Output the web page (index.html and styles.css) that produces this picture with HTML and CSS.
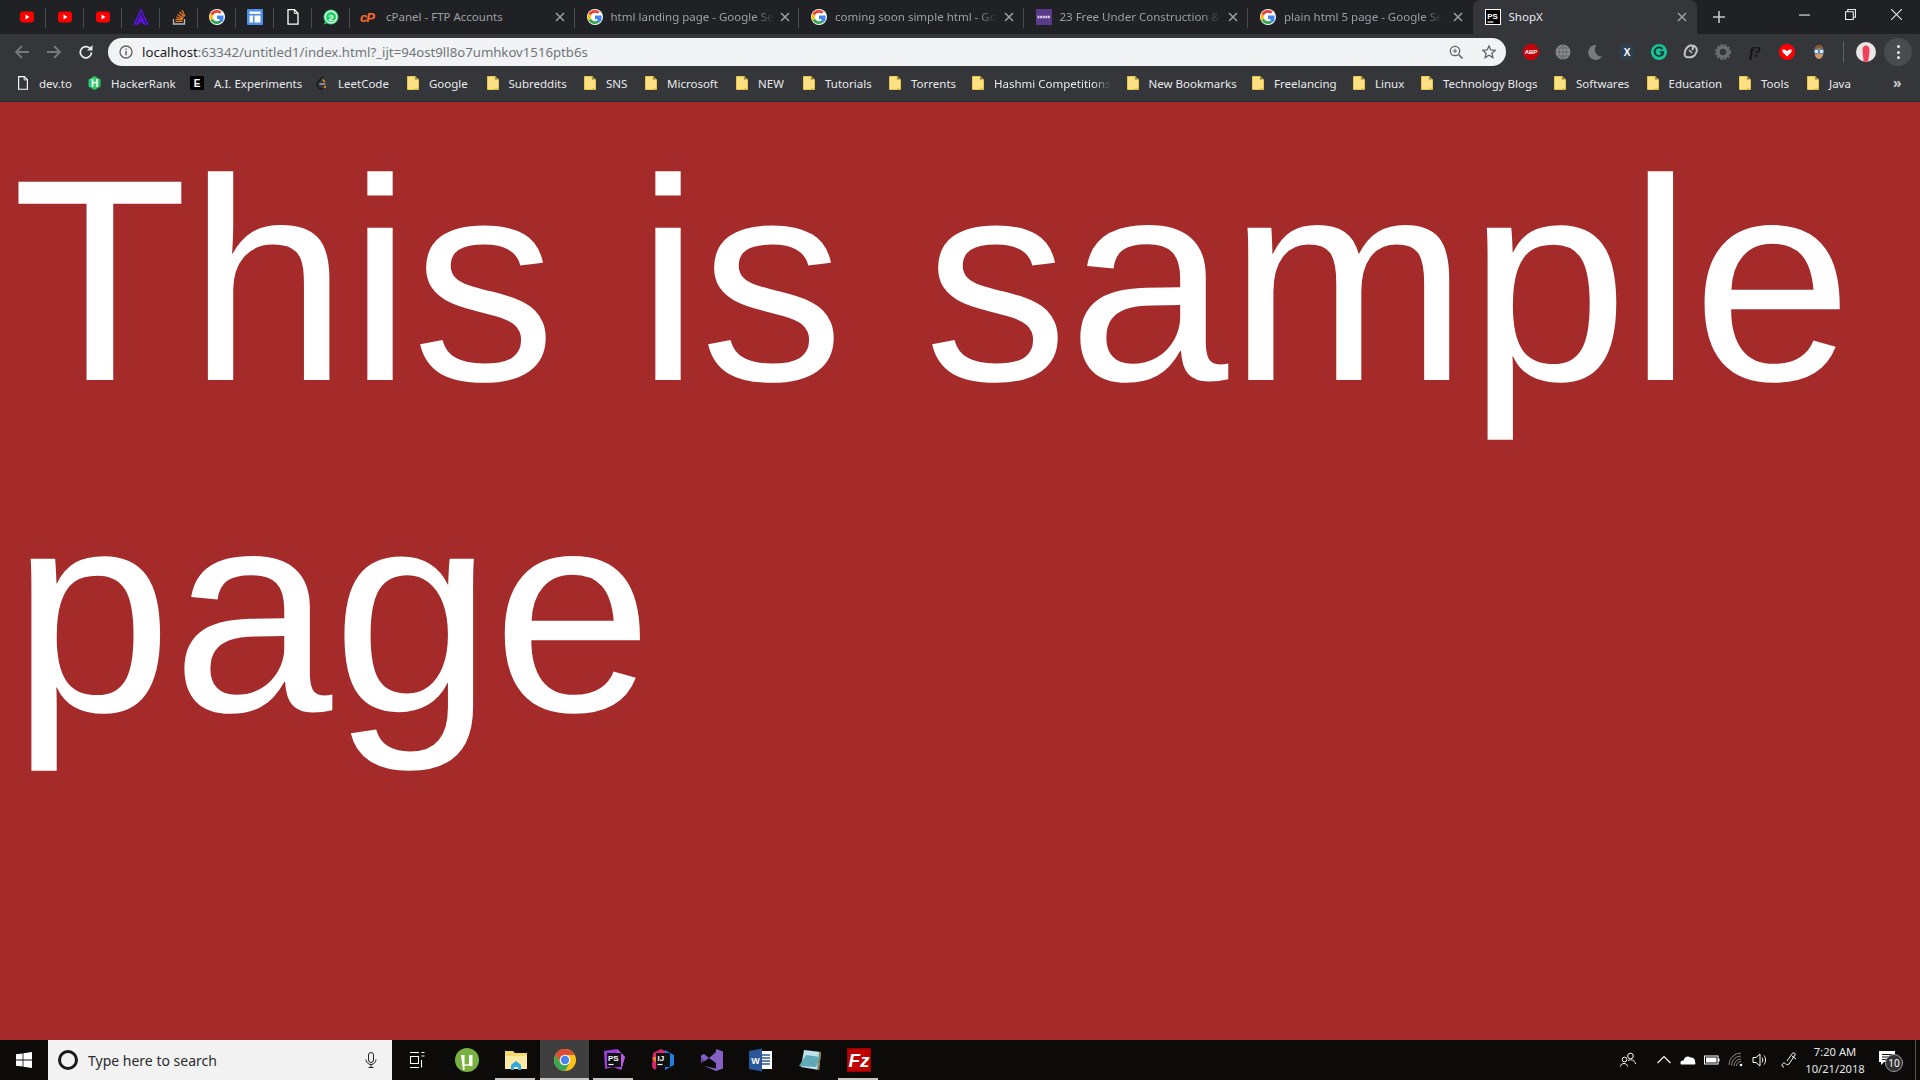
FILE: index.html
```html
<!DOCTYPE html>
<html lang="en">
<head>
    <meta charset="UTF-8">
    <title>ShopX</title>
    <link rel="stylesheet" href="styles.css">
</head>
<body>
    <svg class="sprites" width="0" height="0">
        <symbol id="yt" viewBox="0 0 16 16"><rect x="1" y="2.500" width="14" height="11" rx="3" fill="#f00"/><path d="M6.500 5.500v5l4-2.500z" fill="#fff"/></symbol>
        <symbol id="goog" viewBox="0 0 16 16">
            <circle cx="8" cy="8" r="8" fill="#fff"/>
            <path d="M8 6.600h6.500c.1.500.1 1 .1 1.400 0 .7-.1 1.300-.3 1.900H8z" fill="#4285f4"/>
            <path d="M3.900 9.400l-2.400 1.900A7 7 0 0 0 8 15c1.800 0 3.400-.6 4.600-1.700l-2.300-1.800c-.6.400-1.400.7-2.300.7-1.900 0-3.500-1.200-4.100-2.800z" fill="#34a853"/>
            <path d="M1.500 4.700a7 7 0 0 0 0 6.600l2.400-1.900a4.200 4.200 0 0 1 0-2.800z" fill="#fbbc05"/>
            <path d="M8 1A7 7 0 0 0 1.500 4.700l2.400 1.900C4.500 5 6.100 3.800 8 3.800c1 0 1.900.4 2.600 1l2.100-2.100A7 7 0 0 0 8 1z" fill="#ea4335"/>
            <path d="M12.600 13.300c1.200-1 1.900-2.100 2-3.400H10.500c.1.600-.1 1.100-.2 1.600z" fill="#4285f4"/>
        </symbol>
        <symbol id="folder" viewBox="0 0 12 14"><path d="M.5.500h7.500v2.500c0 .5.200.7.700.7h2.800v9.800H.5z" fill="#ffe082" stroke="#e6c64d"/><path d="M8 .5l3.500 3.200" stroke="#e6c64d" fill="none"/><path d="M8 13h3.500" stroke="#d4b23c"/></symbol>
        <symbol id="page" viewBox="0 0 12 16"><path d="M1 .7h6.500L11 4.200v11H1z" fill="none" stroke="#fff" stroke-width="1.300"/><path d="M7.300.7v3.700H11" fill="none" stroke="#fff"/></symbol>
        <symbol id="close" viewBox="0 0 10 10"><path d="M1 1l8 8M9 1l-8 8" stroke="#9aa0a6" stroke-width="1.500"/></symbol>
    </svg>

    <div class="tabstrip">
        <div class="pin"><svg class="ico16"><use href="#yt"/></svg></div>
        <div class="pin"><svg class="ico16"><use href="#yt"/></svg></div>
        <div class="pin"><svg class="ico16"><use href="#yt"/></svg></div>
        <div class="pin"><svg class="ico16" viewBox="0 0 16 16"><path d="M8 1L1.500 15h2.800L8 7l3.700 8h2.800zM5.300 15L8 10.500l2.700 4.500" fill="none" stroke="#5b12e0" stroke-width="1.600"/></svg></div>
        <div class="pin"><svg class="ico16" viewBox="0 0 16 16"><path d="M2.500 10v5h11v-5" fill="none" stroke="#bcbbbb" stroke-width="1.300"/><path d="M4.500 12.500h7M4.700 10.300l6.800.6M5.300 8l6.600 1.800M6.500 5.500l5.900 3.400M8.500 3l4.800 4.800M11 1l2.800 5.900" stroke="#f48024" stroke-width="1.200"/></svg></div>
        <div class="pin"><svg class="ico16"><use href="#goog"/></svg></div>
        <div class="pin"><svg class="ico16" viewBox="0 0 16 16"><rect width="16" height="16" rx="1" fill="#4a8fe7"/><path d="M2.500 2.500h11v2.500h-11zM2.500 6.500h3.500v7h-3.500zM7.500 6.500h6v7h-6z" fill="#fff"/></svg></div>
        <div class="pin"><svg class="ico16"><use href="#page"/></svg></div>
        <div class="pin"><svg class="ico16" viewBox="0 0 16 16"><circle cx="8" cy="8" r="7.500" fill="#25d366"/><path d="M1 15.500l1.300-4.300 2.800 2.800z" fill="#25d366"/><circle cx="8" cy="8" r="5.800" fill="none" stroke="#fff" stroke-width="1.200"/><text x="8" y="11.500" class="wa-count">2</text></svg></div>

        <div class="tab">
            <svg class="cp" viewBox="0 0 18 14"><text x="0" y="12" class="cp-mark">cP</text></svg>
            <span class="tab-title">cPanel - FTP Accounts</span>
            <svg class="tab-x"><use href="#close"/></svg>
        </div>
        <div class="tab">
            <svg class="ico16"><use href="#goog"/></svg>
            <span class="tab-title tab-fade">html landing page - Google Se</span>
            <svg class="tab-x"><use href="#close"/></svg>
        </div>
        <div class="tab">
            <svg class="ico16"><use href="#goog"/></svg>
            <span class="tab-title tab-fade">coming soon simple html - Go</span>
            <svg class="tab-x"><use href="#close"/></svg>
        </div>
        <div class="tab">
            <svg class="ico16" viewBox="0 0 16 16"><rect width="16" height="16" fill="#5b3a8c"/><path d="M1.500 8h13" stroke="#d8d0e8" stroke-width="2.500" stroke-dasharray="2 .6"/></svg>
            <span class="tab-title tab-fade">23 Free Under Construction &amp;</span>
            <svg class="tab-x"><use href="#close"/></svg>
        </div>
        <div class="tab tab-nosep">
            <svg class="ico16"><use href="#goog"/></svg>
            <span class="tab-title tab-fade">plain html 5 page - Google Se</span>
            <svg class="tab-x"><use href="#close"/></svg>
        </div>
        <div class="tab tab-active">
            <svg class="ico16" viewBox="0 0 16 16"><rect width="16" height="16" fill="#000"/><rect x=".5" y=".5" width="15" height="15" fill="none" stroke="#fff"/><text x="2.200" y="9.500" class="ps-mark">PS</text><path d="M2.500 13h6" stroke="#fff" stroke-width="1.200"/></svg>
            <span class="tab-title">ShopX</span>
            <svg class="tab-x"><use href="#close"/></svg>
        </div>
        <svg class="newtab" viewBox="0 0 12 12"><path d="M6 0v12M0 6h12" stroke="#c4c7c5" stroke-width="1.600"/></svg>
        <div class="winbtns">
            <svg class="winbtn" viewBox="0 0 10 10"><path d="M0 5.500h10" stroke="#e8eaed"/></svg>
            <svg class="winbtn" viewBox="0 0 10 10"><path d="M.5 2.500h7v7h-7zM2.500 2.500v-2h7v7h-2" fill="none" stroke="#e8eaed"/></svg>
            <svg class="winbtn" viewBox="0 0 10 10"><path d="M0 0l10 10M10 0L0 10" stroke="#e8eaed"/></svg>
        </div>
    </div>

    <div class="toolbar">
        <svg class="nav" viewBox="0 0 16 16"><path d="M15 8H2M8 2L2 8l6 6" fill="none" stroke="#75787c" stroke-width="1.800"/></svg>
        <svg class="nav" viewBox="0 0 16 16"><path d="M1 8h13M8 2l6 6-6 6" fill="none" stroke="#75787c" stroke-width="1.800"/></svg>
        <svg class="nav" viewBox="0 0 16 16"><path d="M13.500 8.500a5.600 5.600 0 1 1-1.700-4.300" fill="none" stroke="#e8eaed" stroke-width="1.800"/><path d="M14.500 1v5.500H9z" fill="#e8eaed"/></svg>
        <div class="omnibox">
            <svg class="ico14" viewBox="0 0 14 14"><circle cx="7" cy="7" r="6" fill="none" stroke="#5f6368" stroke-width="1.300"/><path d="M7 6v4.300M7 3.500v1.300" stroke="#5f6368" stroke-width="1.500"/></svg>
            <span class="url"><span class="url-host">localhost</span>:63342/untitled1/index.html?_ijt=94ost9ll8o7umhkov1516ptb6s</span>
            <svg class="ico14 omni-zoom" viewBox="0 0 14 14"><circle cx="6" cy="6" r="4.700" fill="none" stroke="#5f6368" stroke-width="1.300"/><path d="M9.500 9.500L13.500 13.500" stroke="#5f6368" stroke-width="1.600"/><path d="M6 3.800v4.400M3.800 6h4.400" stroke="#5f6368"/></svg>
            <svg class="ico14 omni-star" viewBox="0 0 14 14"><path d="M7 1l1.800 4 4.400.4-3.300 2.900 1 4.300L7 10.300l-3.900 2.300 1-4.300L.8 5.400 5.200 5z" fill="none" stroke="#5f6368" stroke-width="1.300"/></svg>
        </div>
        <div class="extensions">
            <svg class="ext" viewBox="0 0 16 16"><path d="M5 0h6l5 5v6l-5 5H5l-5-5V5z" fill="#c4040c"/><text x="8" y="10.300" class="abp">ABP</text></svg>
            <svg class="ext" viewBox="0 0 16 16"><circle cx="8" cy="8" r="7.500" fill="#8a8d90"/><path d="M.5 8h15M2 4h12M2 12h12M8 .5v15M8 .5c-5 4-5 11 0 15M8 .5c5 4 5 11 0 15" fill="none" stroke="#5a5d60" stroke-width=".7"/></svg>
            <svg class="ext" viewBox="0 0 16 16"><path d="M9.500 1A7.500 7.500 0 1 0 15 12.500 7 7 0 0 1 9.500 1z" fill="#77797c"/></svg>
            <svg class="ext" viewBox="0 0 16 16"><rect x="1" y="1" width="14" height="14" rx="2" fill="#2c3e50"/><text x="8" y="11.500" class="ext-x">X</text></svg>
            <svg class="ext" viewBox="0 0 16 16"><circle cx="8" cy="8" r="8" fill="#15c39a"/><path d="M11.500 5.200A4.300 4.300 0 1 0 12.300 8H8.800" fill="none" stroke="#1d2b29" stroke-width="1.700"/><path d="M10 10l2.300 1.800V8z" fill="#1d2b29"/></svg>
            <svg class="ext" viewBox="0 0 16 16"><path d="M6 2c4-2 5 2 3 4M9 2c4-1 6 4 4 7-1 3-5 5-7 4M6 13c-4 1-5-2-4-5 0-2 2-5 4-6" fill="none" stroke="#c0c2c4" stroke-width="2"/><path d="M6 6l3 3" stroke="#c0c2c4" stroke-width="1.500"/></svg>
            <svg class="ext" viewBox="0 0 16 16"><circle cx="8" cy="8" r="5" fill="none" stroke="#6a6c70" stroke-width="3.400"/><circle cx="8" cy="8" r="7" fill="none" stroke="#6a6c70" stroke-width="2" stroke-dasharray="2.200 1.600"/></svg>
            <svg class="ext" viewBox="0 0 16 16"><text x="8" y="13" class="ext-f">f?</text></svg>
            <svg class="ext" viewBox="0 0 16 16"><circle cx="8" cy="8" r="8" fill="#f00"/><path d="M8 12.500L3.500 8V5.500h2L8 7l2.500-1.500h2V8z" fill="#fff"/></svg>
            <svg class="ext" viewBox="0 0 16 16"><path d="M3.500 8C3 3 6 1 8 1s5 2 4.500 7c0 4-2 7-4.500 7S3.500 12 3.500 8z" fill="#d49a66"/><path d="M3.500 6C4 2 6 1 8 1s4 1 4.500 5C10 4 6 4 3.500 6z" fill="#8a5a32"/><circle cx="5.500" cy="7.500" r="2.300" fill="#dfeaf2" stroke="#3a78c2"/><circle cx="10.500" cy="7.500" r="2.300" fill="#dfeaf2" stroke="#3a78c2"/></svg>
            <div class="ext-sep"></div>
            <svg class="avatar" viewBox="0 0 20 20"><circle cx="10" cy="10" r="10" fill="#e6e6e6"/><path d="M6.500 8a3.500 4.500 0 0 1 7 0c0 4-1 9-1.500 11.500-1.500.5-3 .5-4.500 0C7.500 16 6.500 12 6.500 8z" fill="#f0405a"/></svg>
            <div class="menu-btn"><span class="dot"></span><span class="dot"></span><span class="dot"></span></div>
        </div>
    </div>

    <div class="bookmarks">
        <div class="bm"><svg class="bm-ico"><use href="#page"/></svg>dev.to</div>
        <div class="bm"><svg class="bm-ico bm-ico-hr" viewBox="0 0 12 14"><path d="M6 0l6 3.500v7L6 14l-6-3.500v-7z" fill="#2ec866"/><text x="6" y="10.500" class="hr">H</text></svg>HackerRank</div>
        <div class="bm"><svg class="bm-ico bm-ico-wide" viewBox="0 0 14 14"><rect width="14" height="14" rx="1" fill="#000"/><text x="7" y="11" class="exp">E</text></svg>A.I. Experiments</div>
        <div class="bm"><svg class="bm-ico" viewBox="0 0 12 14"><path d="M7 .5L2 6c-1.500 2-1 4.500.5 5.800 1.500 1.500 4 1.500 5.500.2" fill="none" stroke="#1b1b1b" stroke-width="1.400"/><path d="M3.500 8h6" stroke="#b3b3b3" stroke-width="1.300"/><path d="M6.500 3.500L9 6M8 12l2-2" stroke="#f89f1b" stroke-width="1.300"/></svg>LeetCode</div>
        <div class="bm"><svg class="bm-ico"><use href="#folder"/></svg>Google</div>
        <div class="bm"><svg class="bm-ico"><use href="#folder"/></svg>Subreddits</div>
        <div class="bm"><svg class="bm-ico"><use href="#folder"/></svg>SNS</div>
        <div class="bm"><svg class="bm-ico"><use href="#folder"/></svg>Microsoft</div>
        <div class="bm"><svg class="bm-ico"><use href="#folder"/></svg>NEW</div>
        <div class="bm"><svg class="bm-ico"><use href="#folder"/></svg>Tutorials</div>
        <div class="bm"><svg class="bm-ico"><use href="#folder"/></svg>Torrents</div>
        <div class="bm"><svg class="bm-ico"><use href="#folder"/></svg><span class="bm-fade">Hashmi Competitions</span></div>
        <div class="bm"><svg class="bm-ico"><use href="#folder"/></svg>New Bookmarks</div>
        <div class="bm"><svg class="bm-ico"><use href="#folder"/></svg>Freelancing</div>
        <div class="bm"><svg class="bm-ico"><use href="#folder"/></svg>Linux</div>
        <div class="bm"><svg class="bm-ico"><use href="#folder"/></svg>Technology Blogs</div>
        <div class="bm"><svg class="bm-ico"><use href="#folder"/></svg>Softwares</div>
        <div class="bm"><svg class="bm-ico"><use href="#folder"/></svg>Education</div>
        <div class="bm"><svg class="bm-ico"><use href="#folder"/></svg>Tools</div>
        <div class="bm"><svg class="bm-ico"><use href="#folder"/></svg>Java</div>
        <div class="bm-more">»</div>
    </div>

    <main class="page">
        <p class="sample">This is sample page</p>
    </main>

    <div class="taskbar">
        <div class="start"><svg class="win-logo" viewBox="0 0 16 16"><path d="M0 2.300l6.600-.9v6.200H0zM7.400 1.300L16 0v7.600H7.400zM0 8.400h6.600v6.200L0 13.700zM7.400 8.400H16V16l-8.600-1.200z" fill="#fff"/></svg></div>
        <div class="search">
            <span class="cortana"></span>
            <span class="search-text">Type here to search</span>
            <svg class="mic" viewBox="0 0 12 16"><rect x="3.500" y=".5" width="5" height="10" rx="2.500" fill="none" stroke="#222"/><path d="M1 7.500a5 5 0 0 0 10 0M6 12.500v3M3.500 15.500h5" fill="none" stroke="#222"/></svg>
        </div>
        <div class="task task-view"><svg class="task-ico16" viewBox="0 0 16 16"><path d="M1 .5h9M1 15.500h9M1.500 4.500h8v7h-8z M12.500 .5h3M12.500 4h3M12.500 8v7.500" fill="none" stroke="#fff" stroke-width="1.100"/></svg></div>
        <div class="task"><svg class="task-ico" viewBox="0 0 24 24"><circle cx="12" cy="12" r="12" fill="#78b13f"/><path d="M6 7h3.500v8c0 2 3.500 2 4.500.5V7h3.500v11H14v-1c-1.500 1-3 1-4.500.5V22H8z" fill="#fff"/></svg></div>
        <div class="task task-open"><svg class="task-ico" viewBox="0 0 24 24"><path d="M1 3h8l2 2h12v16H1z" fill="#f6d66f"/><path d="M1 8h22v13H1z" fill="#fde9a2"/><path d="M7 17l5-4 5 4v5h-3v-3h-4v3H7z" fill="#2fa7e0"/></svg></div>
        <div class="task task-active"><svg class="task-ico" viewBox="0 0 24 24"><circle cx="12" cy="12" r="11" fill="#fbc116"/><path d="M12 1a11 11 0 0 0-9.500 5.500L8 15.500 12 7h9.500A11 11 0 0 0 12 1z" fill="#dd4b39"/><path d="M2.500 6.500A11 11 0 0 0 12 23l4-7-8 .5z" fill="#3aa757"/><circle cx="12" cy="12" r="5.300" fill="#fff"/><circle cx="12" cy="12" r="4.200" fill="#4a84f0"/></svg></div>
        <div class="task task-open"><svg class="task-ico" viewBox="0 0 24 24"><path d="M2 3l13-2 8 8-4 13-8-3-8 2z" fill="#9b3dd9"/><path d="M15 1l8 8-4 13z" fill="#c05be8"/><rect x="5" y="5" width="14" height="14" fill="#111"/><text x="6" y="13" class="mono-mark">PS</text><path d="M6.500 16.500h5" stroke="#fff" stroke-width="1.200"/></svg></div>
        <div class="task"><svg class="task-ico" viewBox="0 0 24 24"><path d="M2 5l8-4 6 3-12 18-3-3z" fill="#d6276e"/><path d="M14 2l9 5v10l-9 5z" fill="#1f7fe0"/><path d="M1 10l5-2v8z" fill="#f58220"/><rect x="5" y="5" width="14" height="14" fill="#111"/><text x="6.500" y="13" class="mono-mark">IJ</text><path d="M6.500 16.500h5" stroke="#fff" stroke-width="1.200"/></svg></div>
        <div class="task"><svg class="task-ico" viewBox="0 0 24 24"><path d="M16 1l7 2.500v17L16 23 4 18l12 2.500V15L9 10 4 13.500 1 12V7.500l3-1.500 5 4 7-6z" fill="#8661c5"/><path d="M16 7.500L11.500 11l4.500 3.500zM4 9.500v3.500l2-1.700z" fill="#8661c5"/><path d="M1 9l4 3-4 3z" fill="#6a4bab"/></svg></div>
        <div class="task"><svg class="task-ico" viewBox="0 0 24 24"><path d="M10 3h13v18H10z" fill="#fff"/><path d="M13 7h8M13 10h8M13 13h8M13 16h8" stroke="#2b579a" stroke-width="1.300"/><path d="M0 3l13-2.500v23L0 21z" fill="#2b579a"/><text x="6.500" y="15.500" class="word-mark">W</text></svg></div>
        <div class="task"><svg class="task-ico" viewBox="0 0 24 24"><path d="M6 2l17 2-2 18-18-3z" fill="#bfe3ea"/><path d="M21 4l2 0-2 18-2-.3z" fill="#8a7d5a"/><path d="M1 18L8 7l14 2-4 10z" fill="#5fa9b8"/></svg></div>
        <div class="task task-open"><svg class="task-ico" viewBox="0 0 24 24"><rect width="24" height="24" fill="#bf0000"/><rect x=".5" y=".5" width="23" height="23" fill="none" stroke="#7a0000" stroke-dasharray="1 1"/><text x="12" y="19" class="fz-mark">Fz</text></svg></div>

        <div class="tray">
            <svg class="tray-ico people" viewBox="0 0 16 16"><circle cx="10.500" cy="4" r="2.800" fill="none" stroke="#fff"/><circle cx="4.500" cy="7.500" r="2.300" fill="none" stroke="#fff"/><path d="M.5 14.500c0-4 7-4 7 0M8 8.500c3-1.500 7-.5 7.500 3.500" fill="none" stroke="#fff"/></svg>
            <svg class="tray-ico" viewBox="0 0 16 16"><path d="M1.500 11L8 4.500l6.500 6.500" fill="none" stroke="#fff" stroke-width="1.100"/></svg>
            <svg class="tray-ico" viewBox="0 0 16 16"><path d="M1 12.500c-1.500-2 0-4.500 2.500-4C4 5 8 3 10.500 5.500c3-.5 5 2 4.500 4.500.8 1 .5 2.500-1 2.500z" fill="#fff"/></svg>
            <svg class="tray-ico" viewBox="0 0 16 16"><rect x=".5" y="4" width="13.500" height="8" fill="none" stroke="#fff"/><rect x="2" y="5.500" width="10.500" height="5" fill="#fff"/><rect x="14" y="6.500" width="1.500" height="3" fill="#fff"/></svg>
            <svg class="tray-ico" viewBox="0 0 16 16"><path d="M1 13A12 12 0 0 1 13 1M3.500 13.500A9.500 9.500 0 0 1 13 4M6 14a7 7 0 0 1 7-7M8.500 14A4.500 4.500 0 0 1 13 9.500" fill="none" stroke="#8a8a8a"/><circle cx="13" cy="13" r="1.300" fill="#fff"/></svg>
            <svg class="tray-ico" viewBox="0 0 16 16"><path d="M1 5.500h3L8 2v12L4 10.500H1zM10 5.500c1 1.500 1 3.500 0 5M12 3.500c2 2.500 2 6.500 0 9" fill="none" stroke="#fff"/></svg>
            <svg class="tray-ico pen" viewBox="0 0 16 16"><path d="M3 15c-3 0-2-4 0-4 2 0 2 3 5 1l6-9c1-2-2-3-3-1L6 9M11 4l4 3" fill="none" stroke="#fff"/></svg>
            <div class="clock"><span>7:20 AM</span><span>10/21/2018</span></div>
            <div class="notify">
                <svg class="notify-ico" viewBox="0 0 16 16"><path d="M0 1h16v11H5l-3 3v-3H0z" fill="#fff"/><path d="M3 4.500h10M3 7h10M3 9.500h6" stroke="#111"/></svg>
                <span class="notify-badge">10</span>
            </div>
            <div class="show-desktop"></div>
        </div>
    </div>
</body>
</html>
```

FILE: styles.css
```css
html, body {
    margin: 0;
    padding: 0;
    height: 100%;
}
body {
    display: flex;
    flex-direction: column;
    width: 1920px;
    height: 1080px;
    overflow: hidden;
    font-family: "Noto Sans", "Liberation Sans", sans-serif;
    background: #a52a2a;
}
.sprites {
    position: absolute;
}
svg {
    display: block;
    flex: none;
}
.ico16 {
    width: 16px;
    height: 16px;
}
.ico14 {
    width: 14px;
    height: 14px;
}

/* tab strip */
.tabstrip {
    display: flex;
    flex: none;
    align-items: stretch;
    height: 34px;
    padding-left: 8px;
    background: #202124;
}
.pin {
    display: flex;
    align-items: center;
    justify-content: center;
    position: relative;
    width: 38px;
}
.pin::after, .tab::after {
    content: "";
    position: absolute;
    right: 0;
    top: 8px;
    height: 20px;
    width: 1px;
    background: #4a4c50;
}
.tab {
    display: flex;
    align-items: center;
    position: relative;
    box-sizing: border-box;
    width: 224.5px;
    padding: 0 10px 0 12px;
    font-size: 11.5px;
    color: #9aa0a6;
}
.tab-nosep::after, .tab-active::after {
    display: none;
}
.tab-active {
    background: #35363a;
    border-radius: 8px 8px 0 0;
    color: #e8eaed;
}
.cp {
    width: 18px;
    height: 14px;
    margin-left: -2px;
}
.cp-mark {
    font: italic bold 13px "Liberation Sans", sans-serif;
    fill: #ff6c2c;
    letter-spacing: -1px;
}
.tab-title {
    margin: 0 auto 2px 8px;
    white-space: nowrap;
}
.tab-fade {
    -webkit-mask-image: linear-gradient(to right, #000 88%, transparent 100%);
    mask-image: linear-gradient(to right, #000 88%, transparent 100%);
}
.tab-x {
    width: 10px;
    height: 10px;
    margin-left: 6px;
}
.newtab {
    width: 12px;
    height: 12px;
    margin: 11px 0 0 16px;
}
.winbtns {
    display: flex;
    margin-left: auto;
    padding: 9px 18px 0 0;
    gap: 35px;
}
.winbtn {
    width: 11px;
    height: 11px;
}
.wa-count {
    font: bold 9px "Liberation Sans", sans-serif;
    fill: #fff;
    text-anchor: middle;
}
.ps-mark {
    font: bold 8px "Liberation Sans", sans-serif;
    fill: #fff;
}

/* toolbar */
.toolbar {
    display: flex;
    flex: none;
    align-items: center;
    height: 36px;
    padding-left: 14px;
    background: #35363a;
}
.nav {
    width: 16px;
    height: 16px;
    margin-right: 16px;
}
.omnibox {
    display: flex;
    align-items: center;
    box-sizing: border-box;
    width: 1398px;
    height: 28px;
    margin-left: -2px;
    padding: 0 10px 0 11px;
    background: #f1f3f4;
    border-radius: 14px;
}
.url {
    margin-left: 9px;
    font-size: 13.2px;
    color: #70757a;
    white-space: nowrap;
}
.url-host {
    color: #202124;
}
.omni-zoom {
    margin-left: auto;
}
.omni-star {
    margin-left: 19px;
}
.extensions {
    display: flex;
    align-items: center;
    margin-left: 17px;
    gap: 16px;
}
.ext {
    width: 16px;
    height: 16px;
}
.ext-sep {
    width: 1px;
    height: 20px;
    margin-right: -4px;
    background: #5f6368;
}
.avatar {
    width: 20px;
    height: 20px;
}
.menu-btn {
    display: flex;
    flex-direction: column;
    align-items: center;
    justify-content: center;
    gap: 2.500px;
    width: 28px;
    height: 28px;
    margin-left: -8px;
    border-radius: 50%;
    background: #4a4b4f;
}
.dot {
    width: 3px;
    height: 3px;
    border-radius: 50%;
    background: #e8eaed;
}
.abp {
    font: bold 6px "Liberation Sans", sans-serif;
    fill: #fff;
    text-anchor: middle;
}
.ext-x {
    font: bold 10px "Liberation Sans", sans-serif;
    fill: #fff;
    text-anchor: middle;
}
.ext-f {
    font: italic bold 14px "Liberation Serif", serif;
    fill: #111;
    text-anchor: middle;
}

/* bookmarks bar */
.bookmarks {
    display: grid;
    flex: none;
    grid-template-columns: 71px 102px 126px 91px 79.5px 97.5px 61px 91px 67px 86px 83px 154.5px 125.5px 101px 68px 133px 92.5px 92.5px 68px 80px 1fr;
    align-items: center;
    height: 26px;
    padding: 0 0 5px 17px;
    background: #35363a;
    border-bottom: 1px solid #2a2b2e;
    font-size: 11.5px;
    color: #e8eaed;
}
.bm {
    display: flex;
    align-items: center;
    white-space: nowrap;
    overflow: hidden;
}
.bm-ico {
    width: 12px;
    height: 14px;
    margin-right: 10px;
}
.bm-ico-hr {
    width: 13px;
}
.bm-ico-wide {
    width: 14px;
    height: 14px;
}
.bm-fade {
    -webkit-mask-image: linear-gradient(to right, #000 85%, transparent 100%);
    mask-image: linear-gradient(to right, #000 85%, transparent 100%);
}
.bm-more {
    margin-left: 6px;
    font-size: 14px;
    font-weight: bold;
    color: #c8cacc;
    line-height: 1;
}
.hr, .exp {
    font: bold 10px "Liberation Sans", sans-serif;
    fill: #fff;
    text-anchor: middle;
}

/* page content */
.page {
    flex: 1;
    min-height: 0;
    background: #a52a2a;
    padding: 13px 12px 0;
}
.sample {
    margin: 0;
    font-family: "Liberation Sans", Arial, sans-serif;
    font-size: 288px;
    color: #fff;
}

/* taskbar */
.taskbar {
    display: flex;
    flex: none;
    align-items: stretch;
    height: 40px;
    background: #0c0b0a;
    color: #fff;
}
.start {
    display: flex;
    align-items: center;
    justify-content: center;
    width: 48px;
}
.win-logo {
    width: 16px;
    height: 16px;
}
.search {
    display: flex;
    align-items: center;
    box-sizing: border-box;
    width: 344px;
    padding: 0 15px 0 10px;
    background: #f2f2f2;
    color: #2a2a2a;
    font-size: 14px;
}
.cortana {
    box-sizing: border-box;
    width: 20px;
    height: 20px;
    border: 3px solid #1a1a1a;
    border-radius: 50%;
}
.search-text {
    margin-left: 10px;
}
.mic {
    width: 12px;
    height: 16px;
    margin-left: auto;
}
.task {
    display: flex;
    align-items: center;
    justify-content: center;
    position: relative;
    width: 49px;
}
.task-view {
    width: 50px;
}
.task-ico {
    width: 24px;
    height: 24px;
}
.task-ico16 {
    width: 16px;
    height: 16px;
}
.task-open::after {
    content: "";
    position: absolute;
    left: 4px;
    right: 5px;
    bottom: 0;
    height: 2px;
    background: #c8c6c4;
}
.task-active {
    background: #3f3f3f;
}
.task-active::after {
    content: "";
    position: absolute;
    left: 0;
    right: 0;
    bottom: 0;
    height: 2px;
    background: #c8c6c4;
}
.mono-mark {
    font: bold 8px "Liberation Sans", sans-serif;
    fill: #fff;
}
.word-mark {
    font: bold 9px "Liberation Sans", sans-serif;
    fill: #fff;
    text-anchor: middle;
}
.fz-mark {
    font: italic bold 19px "Liberation Sans", sans-serif;
    fill: #fff;
    text-anchor: middle;
}
.tray {
    display: flex;
    align-items: center;
    margin-left: auto;
}
.tray-ico {
    width: 16px;
    height: 16px;
    margin-right: 8px;
}
.people {
    margin-right: 20px;
}
.pen {
    margin-left: 5px;
    margin-right: 0;
}
.clock {
    display: flex;
    flex-direction: column;
    align-items: center;
    gap: 1px;
    width: 76px;
    font-size: 11.2px;
    line-height: 16px;
    color: #e6e6e6;
}
.notify {
    position: relative;
    width: 24px;
    height: 24px;
    margin-left: 6px;
}
.notify-ico {
    width: 16px;
    height: 16px;
    margin-top: 2px;
}
.notify-badge {
    position: absolute;
    right: 0;
    bottom: 0;
    width: 16px;
    height: 16px;
    border-radius: 50%;
    border: 1px solid #9a9a9a;
    background: #333;
    font-size: 10px;
    line-height: 16px;
    text-align: center;
}
.show-desktop {
    width: 1px;
    height: 40px;
    margin-left: 12px;
    margin-right: 4px;
    background: #555;
}
```
